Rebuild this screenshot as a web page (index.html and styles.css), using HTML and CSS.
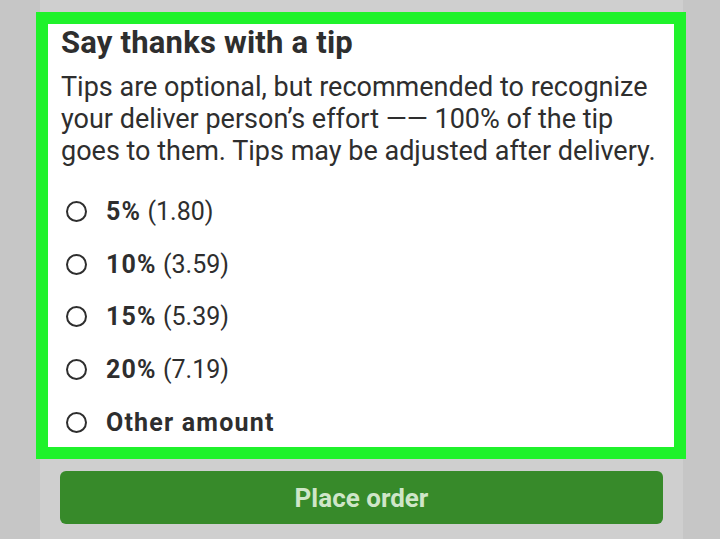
FILE: index.html
```html
<!DOCTYPE html>
<html lang="en">
<head>
    <meta charset="UTF-8">
    <meta name="viewport" content="width=device-width, initial-scale=1.0">
    <title>Tip</title>

    <link rel="stylesheet" href="styles.css">
</head>
<body>

    <div class="screen">
        <div class="tip-card">
            <h3 class="title">Say thanks with a tip</h3>
            <p class="intro">Tips are optional, but recommended to recognize your deliver person’s effort —— 100% of the tip goes to them. Tips may be adjusted after delivery.</p>

            <div class="options">
                <label class="option"><span class="radio"></span><b>5%</b>&nbsp;(1.80)</label>
                <label class="option"><span class="radio"></span><b>10%</b>&nbsp;(3.59)</label>
                <label class="option"><span class="radio"></span><b>15%</b>&nbsp;(5.39)</label>
                <label class="option"><span class="radio"></span><b>20%</b>&nbsp;(7.19)</label>
                <label class="option"><span class="radio"></span><b>Other amount</b></label>
            </div>
        </div>

        <button class="place-order">Place order</button>
    </div>

</body>
</html>
```

FILE: styles.css
```css
/* PAGE */
body {
    margin: 0;
    background-color: #c6c6c6;
    font-family: Roboto, "Liberation Sans", sans-serif;
    color: #2e2e2e;
}

.screen {
    margin-left: 40px;
    width: 643px;
    height: 539px;
    background-color: #cfcfcf;
    display: flex;
    flex-direction: column;
}

/* -------------------------------------- */

.tip-card {
    margin: 12px -3px 0 -4px;
    border: 12px solid #1ff22b;
    background-color: white;
    padding: 1px 10px 0 13px;
    height: 422px;
}

.title {
    margin: 0;
    font-size: 31px;
    line-height: 36px;
    font-weight: 700;
    letter-spacing: 0.2px;
}

.intro {
    margin: 10px 0 0 0;
    font-size: 27px;
    line-height: 32px;
}

.options {
    margin-top: 18px;
    display: flex;
    flex-direction: column;
}

.option {
    display: flex;
    align-items: center;
    height: 52.75px;
    font-size: 25px;
}

.option b {
    font-weight: 700;
    letter-spacing: 1.2px;
}

.radio {
    width: 17px;
    height: 17px;
    border: 2px solid #2e2e2e;
    border-radius: 50%;
    margin: 0 19px 0 5px;
}

/* -------------------------------------- */

.place-order {
    margin: 12px 20px 0 20px;
    height: 53px;
    border: none;
    border-radius: 6px;
    background-color: #378a2a;
    color: #cfe6c8;
    font-family: Roboto, "Liberation Sans", sans-serif;
    font-size: 26px;
    font-weight: 700;
}
```
